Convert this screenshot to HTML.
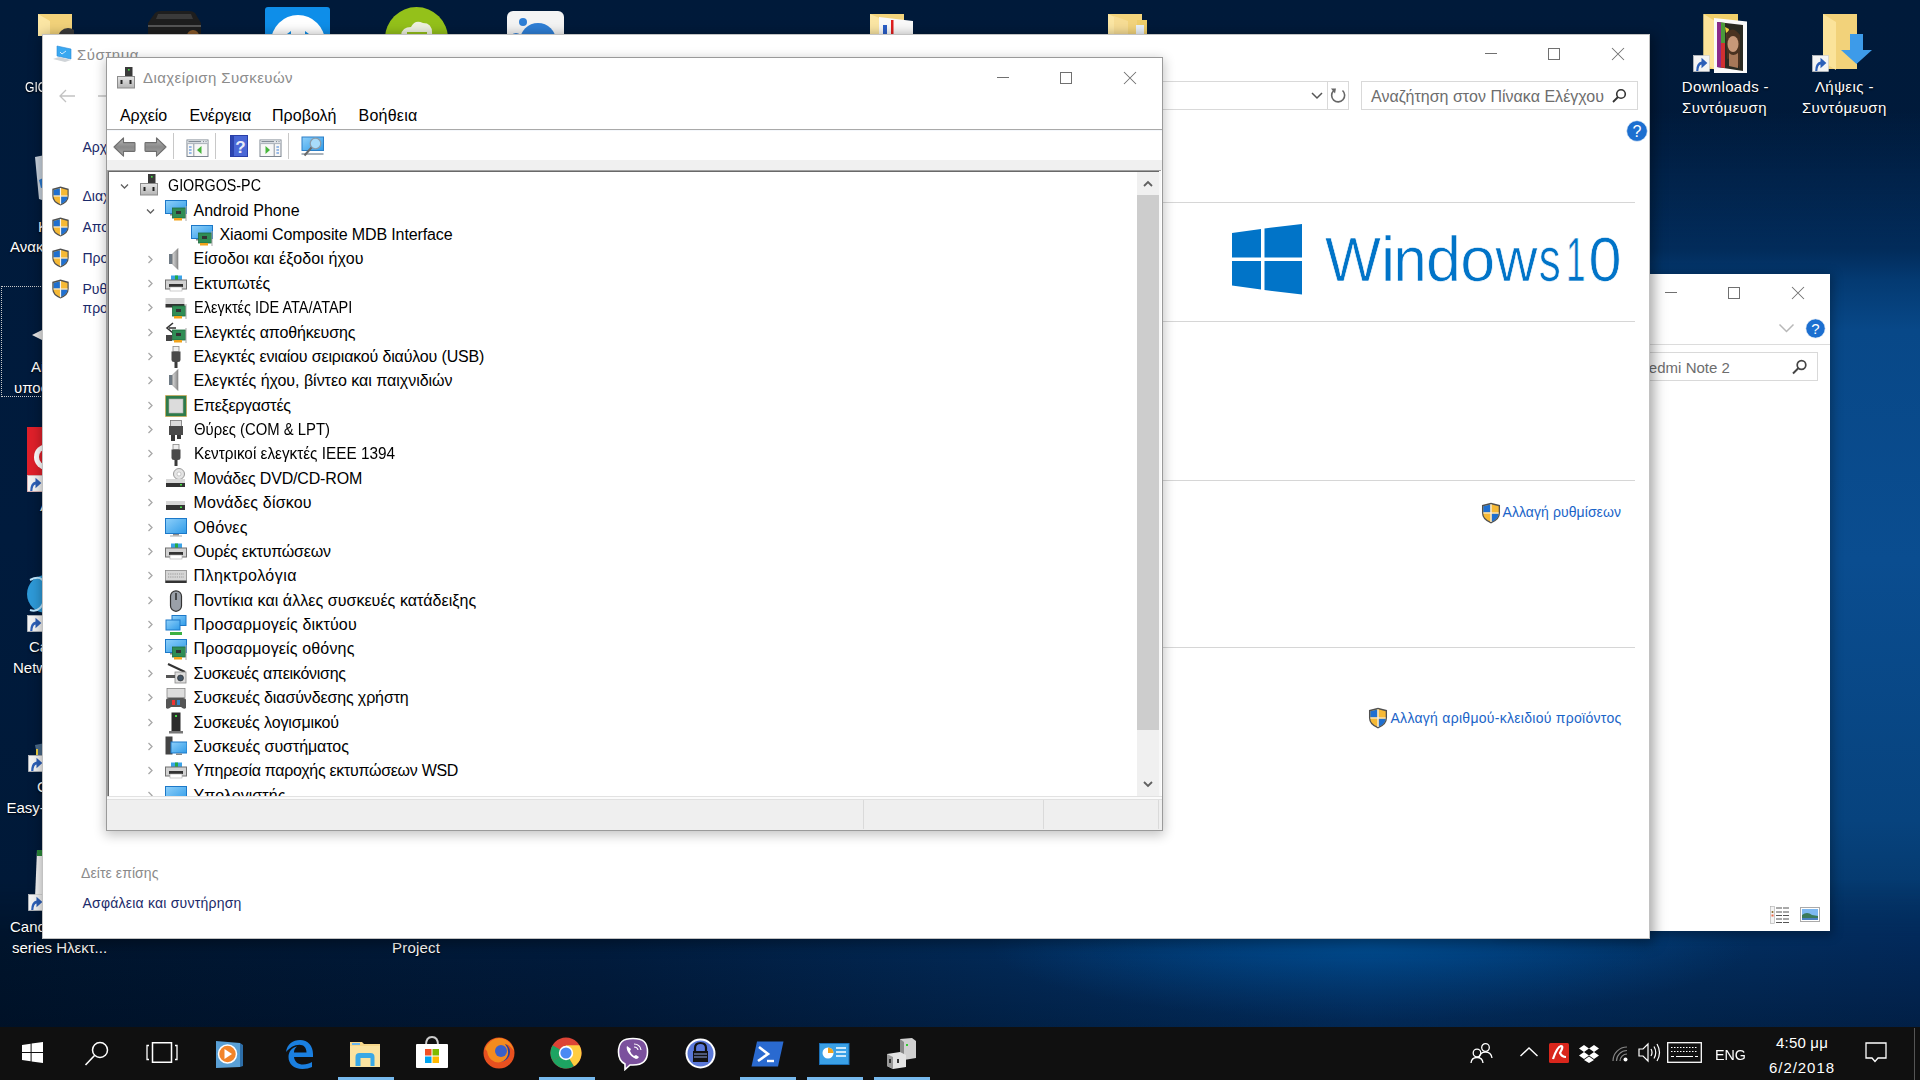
<!DOCTYPE html>
<html><head><meta charset="utf-8">
<style>
*{box-sizing:border-box;margin:0;padding:0}
html,body{width:1920px;height:1080px;overflow:hidden}
body{position:relative;font-family:"Liberation Sans",sans-serif;background:#061a36}
.a{position:absolute}
.t{position:absolute;white-space:nowrap;line-height:1;font-family:"Liberation Sans",sans-serif}
.dl{color:#fff;text-shadow:0 1px 2px #000,0 0 1px #000}
</style></head><body>
<svg width="0" height="0" style="position:absolute">
<defs>
<linearGradient id="gblue" x1="0" y1="0" x2="1" y2="1"><stop offset="0" stop-color="#8fd0fa"/><stop offset="1" stop-color="#2f9be8"/></linearGradient>
<linearGradient id="ggray" x1="0" y1="0" x2="0" y2="1"><stop offset="0" stop-color="#e6e6e6"/><stop offset="1" stop-color="#b4b4b4"/></linearGradient>
<linearGradient id="gspk" x1="0" y1="0" x2="1" y2="0"><stop offset="0" stop-color="#d8d8d8"/><stop offset="1" stop-color="#8a8a8a"/></linearGradient>
<symbol id="card" viewBox="0 0 22 22"><rect x="7.5" y="8" width="13" height="10" fill="#2f8d55" stroke="#1f6b3d" stroke-width=".8"/><rect x="11" y="11" width="5" height="3" fill="#333"/><rect x="9" y="18" width="8" height="2.5" fill="#f2a31b"/><rect x="20.5" y="6" width="1" height="15" fill="#aaa"/></symbol>
<symbol id="i-pc" viewBox="0 0 22 22"><rect x="8" y="0" width="7.5" height="10" fill="#3a3a3a"/><rect x="11" y="2" width="1.6" height="1.6" fill="#44dd44"/><rect x="0.5" y="9.5" width="17" height="11.5" fill="url(#ggray)" stroke="#8c8c8c"/><rect x="3.5" y="13" width="2" height="4" fill="#222"/><rect x="12.5" y="13" width="2" height="4" fill="#222"/></symbol>
<symbol id="i-moncard" viewBox="0 0 22 22"><rect x="0.5" y="0.5" width="21" height="13" fill="url(#gblue)" stroke="#1c78c8"/><rect x="5" y="14" width="6" height="1.5" fill="#888"/><use href="#card"/></symbol>
<symbol id="i-speaker" viewBox="0 0 22 22"><rect x="4" y="6" width="3.5" height="10" fill="#6f7a84"/><path d="M7.5 6 L13 0.5 L13 21.5 L7.5 16 Z" fill="url(#gspk)" stroke="#888" stroke-width=".6"/></symbol>
<symbol id="i-printer" viewBox="0 0 22 22"><rect x="6" y="0.5" width="11" height="5" fill="#3ba3e8"/><rect x="10" y="0.5" width="3" height="5" fill="#22aa44"/><rect x="0.5" y="5" width="21" height="9" fill="#d2d2d2" stroke="#707070"/><rect x="4" y="9" width="14" height="3" fill="#333"/><rect x="5" y="12" width="12" height="4" fill="#fff" stroke="#aaa" stroke-width=".6"/></symbol>
<symbol id="i-ide" viewBox="0 0 22 22"><rect x="0.5" y="0" width="19" height="6" fill="#d4d4d4"/><rect x="0.5" y="6" width="19" height="3.5" fill="#333"/><use href="#card"/></symbol>
<symbol id="i-storage" viewBox="0 0 22 22"><path d="M8 1 L2 6 L8 11 M4 6 L11 6" stroke="#333" stroke-width="1.6" fill="none"/><rect x="1" y="13" width="6" height="6" fill="#444"/><use href="#card"/></symbol>
<symbol id="i-usb" viewBox="0 0 22 22"><rect x="8" y="0.5" width="6" height="5" fill="#eee" stroke="#888" stroke-width=".8"/><path d="M6.5 5.5 H15.5 V14 Q15.5 16 13 16 H9 Q6.5 16 6.5 14 Z" fill="#4a4a4a"/><rect x="9.5" y="16" width="3" height="6" fill="#3a3a3a"/></symbol>
<symbol id="i-chip" viewBox="0 0 22 22"><rect x="0.5" y="0.5" width="21" height="21" fill="#2e7b4a" stroke="#e8a030" stroke-dasharray="1 1"/><rect x="4" y="4" width="14" height="14" fill="#dcdcdc" stroke="#aaa" stroke-width=".6"/></symbol>
<symbol id="i-port" viewBox="0 0 22 22"><rect x="5.5" y="0.5" width="11" height="6" fill="#ddd" stroke="#777" stroke-width=".8"/><rect x="4" y="6" width="14" height="9" fill="#4a4a4a"/><rect x="6" y="15" width="4" height="6" fill="#3a3a3a"/><rect x="12" y="15" width="4" height="4" fill="#3a3a3a"/></symbol>
<symbol id="i-dvd" viewBox="0 0 22 22"><circle cx="14" cy="6" r="5.5" fill="#e4e4e4" stroke="#999"/><circle cx="14" cy="6" r="2" fill="#fff" stroke="#aaa" stroke-width=".6"/><rect x="1" y="11" width="19" height="4" fill="#d8d8d8"/><rect x="1" y="15" width="19" height="4" fill="#333"/><rect x="15" y="16" width="2" height="1.5" fill="#4d4"/></symbol>
<symbol id="i-disk" viewBox="0 0 22 22"><rect x="1" y="8" width="19" height="4" fill="#d8d8d8"/><rect x="1" y="12" width="19" height="5" fill="#333"/><rect x="15" y="13.5" width="2" height="1.5" fill="#4d4"/></symbol>
<symbol id="i-monitor" viewBox="0 0 22 22"><rect x="0.5" y="1.5" width="21" height="15" fill="url(#gblue)" stroke="#1c78c8"/><rect x="8" y="17" width="6" height="1.5" fill="#888"/><rect x="5" y="18.5" width="12" height="1" fill="#aaa"/></symbol>
<symbol id="i-keyboard" viewBox="0 0 22 22"><rect x="0.5" y="4.5" width="21" height="12" fill="#d6d6d6" stroke="#888" stroke-width=".8"/><path d="M3 8h16M3 11h16" stroke="#999" stroke-dasharray="1.2 1"/><rect x="0.5" y="14.5" width="21" height="2.5" fill="#333"/></symbol>
<symbol id="i-mouse" viewBox="0 0 22 22"><rect x="5.5" y="0.8" width="11" height="20.5" rx="5.5" fill="#9aa0a8" stroke="#333" stroke-width="1.2"/><rect x="10.3" y="3" width="1.4" height="7" fill="#222"/></symbol>
<symbol id="i-net" viewBox="0 0 22 22"><rect x="7" y="0.5" width="14" height="10" fill="url(#gblue)" stroke="#1c78c8"/><rect x="1" y="5" width="14" height="10" fill="url(#gblue)" stroke="#1c78c8"/><rect x="5" y="17" width="12" height="3" fill="#3cb043"/></symbol>
<symbol id="i-imaging" viewBox="0 0 22 22"><path d="M3 1 L20 9" stroke="#333" stroke-width="2"/><rect x="10" y="9" width="11" height="11" fill="#ddd" stroke="#888" stroke-width=".8"/><circle cx="15.5" cy="15" r="3" fill="#456" stroke="#222" stroke-width=".6"/><rect x="1" y="12" width="9" height="3" fill="#555"/></symbol>
<symbol id="i-hid" viewBox="0 0 22 22"><rect x="2" y="0.5" width="18" height="9" fill="#ddd" stroke="#888" stroke-width=".8"/><path d="M1 12 Q1 10 4 10 H18 Q21 10 21 12 L21 20 Q19 22 16 19 H6 Q3 22 1 20 Z" fill="#555"/><rect x="7" y="12" width="3" height="5" fill="#e33"/><rect x="12" y="12" width="3" height="5" fill="#38c"/></symbol>
<symbol id="i-software" viewBox="0 0 22 22"><rect x="6.5" y="0.5" width="9" height="19" fill="#2b2b2b"/><rect x="10" y="3" width="2" height="2" fill="#4d4"/><rect x="4" y="19" width="14" height="2.5" fill="#777"/></symbol>
<symbol id="i-system" viewBox="0 0 22 22"><rect x="0.5" y="0.5" width="7" height="18" fill="#444"/><rect x="6" y="6" width="16" height="11" fill="url(#gblue)" stroke="#1c78c8"/><rect x="11" y="17.5" width="6" height="1.5" fill="#888"/></symbol>
<symbol id="shield" viewBox="0 0 18 20"><path d="M9 0.6 L17.2 2.8 V10 Q17.2 16.3 9 19.5 Q0.8 16.3 0.8 10 V2.8 Z" fill="#505050"/><path d="M9 2 L16 3.9 V10 Q16 15.3 9 18.2 Q2 15.3 2 10 V3.9 Z" fill="#f6b935"/><path d="M8.4 2.2 V9.4 H2 V3.9 Z" fill="#1f6fd0"/><path d="M9.6 10.6 H16 Q15.9 15.2 9.6 18 Z" fill="#1f6fd0"/><path d="M9 2 V18.2 M2 10 H16" stroke="#f4f4f4" stroke-width="1.1"/></symbol>
<symbol id="sc" viewBox="0 0 16 16"><rect x="0.5" y="0.5" width="15" height="15" fill="#f4f4f4" stroke="#ccc" stroke-width=".6"/><path d="M3 15 Q3 7 8 6 V2.5 L13.5 7.5 L8 12.5 V9 Q5.5 9.5 5 15 Z" fill="#2c5fb8"/></symbol>
</defs></svg>
<div class="a" style="left:0px;top:0px;width:1920px;height:1080px;background:linear-gradient(180deg,#001a3a 0%,#001b3d 50%,#001835 100%)"></div>
<div class="a" style="left:1560px;top:0px;width:360px;height:1030px;background:linear-gradient(180deg,rgba(3,40,85,0) 110px,#022c5b 250px,#043a72 280px,#084888 330px,#0a4d90 560px,#07437e 820px,#03305f 960px,#022a56 1030px);-webkit-mask-image:linear-gradient(90deg,transparent 0,#000 90px)"></div>
<div class="a" style="left:0px;top:880px;width:1920px;height:150px;background:linear-gradient(90deg,#00142c 0,#011c3e 600px,#022a58 1000px,#033670 1370px,#022d5e 1700px,#02295a 1920px);-webkit-mask-image:linear-gradient(180deg,transparent 0,#000 60px)"></div>
<div class="a" style="left:950px;top:900px;width:900px;height:130px;background:radial-gradient(ellipse 380px 75px at 420px 45px, rgba(0,78,148,.95), rgba(0,78,148,0))"></div>
<div class="a" style="left:0px;top:940px;width:1920px;height:90px;background:linear-gradient(180deg,rgba(0,12,30,0) 0,rgba(0,12,30,.35) 90px)"></div>
<svg class="a" style="left:38px;top:14px;" width="36" height="22" viewBox="0 0 36 22"><rect x="0" y="0" width="34" height="22" fill="#f2d27a"/><path d="M0 0 L12 7 V22 H0 Z" fill="#fbe6a4"/><circle cx="30" cy="24" r="10" fill="#3a3a3a"/></svg>
<svg class="a" style="left:147px;top:11px;" width="55" height="24" viewBox="0 0 55 24"><path d="M8 2 Q10 0 14 0 H42 Q46 0 48 2 L54 12 V24 H1 V12 Z" fill="#1e1e1e"/><path d="M11 3 H44 L46 8 H9 Z" fill="#3a3a3a"/><rect x="1" y="14" width="53" height="2" fill="#555"/><circle cx="46" cy="25" r="6" fill="#8a5a2a"/></svg>
<svg class="a" style="left:265px;top:7px;" width="66" height="28" viewBox="0 0 66 28"><rect x="0" y="0" width="65" height="30" rx="3" fill="#0e8ee9"/><circle cx="33" cy="35" r="27" fill="#fff"/><path d="M18 30 L26 24 V36 Z M48 30 L40 24 V36 Z" fill="#0e8ee9"/></svg>
<svg class="a" style="left:385px;top:7px;" width="63" height="28" viewBox="0 0 63 28"><circle cx="31.5" cy="31.5" r="31.5" fill="#94c11a"/><path d="M16 30 Q16 20 26 20 Q30 12 38 16 Q48 16 47 28 V35 H16 Z" fill="#eef2e0"/><rect x="23" y="26" width="18" height="10" fill="none" stroke="#94c11a" stroke-width="2"/></svg>
<svg class="a" style="left:507px;top:11px;" width="57" height="24" viewBox="0 0 57 24"><rect x="0" y="0" width="57" height="30" rx="6" fill="#f4f4f4"/><circle cx="31" cy="30" r="18" fill="#2f7fd6"/><circle cx="9" cy="28" r="6" fill="#2f7fd6"/><circle cx="16" cy="11" r="4" fill="#2f7fd6"/></svg>
<svg class="a" style="left:870px;top:14px;" width="43" height="21" viewBox="0 0 43 21"><rect x="0" y="0" width="34" height="21" fill="#f3d47c"/><path d="M0 0 L14 6 V21 H0 Z" fill="#fbe6a4"/><path d="M9 3 L43 7 V21 H9 Z" fill="#fafafa"/><rect x="21" y="6" width="2.5" height="15" fill="#e02020"/><rect x="13" y="11" width="4" height="10" fill="#2a5ec8"/></svg>
<svg class="a" style="left:1108px;top:14px;" width="40" height="21" viewBox="0 0 40 21"><rect x="0" y="0" width="34" height="21" fill="#f3d47c"/><path d="M0 0 L14 6 V21 H0 Z" fill="#fbe6a4"/><path d="M6 2 L20 7 V21 H6 Z" fill="#f7dd95"/><rect x="29" y="6" width="10" height="15" fill="#f0cf6a"/><rect x="28" y="11" width="8" height="10" fill="#eaf2fa"/></svg>
<div class="t" style="left:25.00px;top:78.80px;font-size:15px;color:#fff;transform:scaleX(0.8091);transform-origin:0 0;text-shadow:0 1px 2px #000">GIORGOS</div>
<svg class="a" style="left:33px;top:155px;" width="12" height="46" viewBox="0 0 12 46"><path d="M2 2 L12 0 V46 L6 44 Z" fill="#c9d3de"/><path d="M6 25 L12 22 V32 L8 33 Z" fill="#2a7ad0"/></svg>
<div class="t" style="left:38.00px;top:219.30px;font-size:15px;color:#fff;text-shadow:0 1px 2px #000">Κάδος</div>
<div class="t" style="left:10.00px;top:239.00px;font-size:15px;color:#fff;text-shadow:0 1px 2px #000">Ανακύκλωσης</div>
<div class="a" style="left:1px;top:286px;width:44px;height:111px;border:1px dotted #c8c8c8"></div>
<svg class="a" style="left:31px;top:328px;" width="14" height="14" viewBox="0 0 14 14"><path d="M1 7 L13 1 V13 Z" fill="#e4e4e4"/></svg>
<div class="t" style="left:31.00px;top:359.10px;font-size:15px;color:#fff;text-shadow:0 1px 2px #000">Αίτηση</div>
<div class="t" style="left:14.00px;top:380.00px;font-size:15px;color:#fff;text-shadow:0 1px 2px #000">υποστήριξης</div>
<svg class="a" style="left:27px;top:427px;" width="18" height="65" viewBox="0 0 18 65"><rect x="0" y="0" width="18" height="65" fill="#e0202a"/><circle cx="20" cy="30" r="13" fill="#fff"/><circle cx="20" cy="30" r="8" fill="#e0202a"/><use href="#sc" x="0" y="48" width="17" height="17"/></svg>
<div class="t" style="left:40.00px;top:498.30px;font-size:15px;color:#fff;text-shadow:0 1px 2px #000">A</div>
<svg class="a" style="left:26px;top:574px;" width="20" height="58" viewBox="0 0 20 58"><circle cx="20" cy="20" r="19" fill="#2e9ad8"/><path d="M4 6 Q20 -2 20 20 Q16 40 4 36" stroke="#bfe8ff" stroke-width="2" fill="none"/><use href="#sc" x="1" y="41" width="17" height="17"/></svg>
<div class="t" style="left:29.00px;top:638.80px;font-size:15px;color:#fff;text-shadow:0 1px 2px #000">Canon</div>
<div class="t" style="left:13.00px;top:660.30px;font-size:15px;color:#fff;text-shadow:0 1px 2px #000">Network</div>
<svg class="a" style="left:27px;top:743px;" width="18" height="30" viewBox="0 0 18 30"><path d="M8 2 L18 0 V12 L10 12 Z" fill="#4a6a8a"/><rect x="9" y="6" width="2" height="6" fill="#f0d040"/><use href="#sc" x="1" y="12" width="17" height="17"/></svg>
<div class="t" style="left:37.00px;top:778.90px;font-size:15px;color:#fff;text-shadow:0 1px 2px #000">Canon</div>
<div class="t" style="left:6.50px;top:800.10px;font-size:15px;color:#fff;text-shadow:0 1px 2px #000">Easy-PhotoPrint</div>
<svg class="a" style="left:27px;top:850px;" width="18" height="62" viewBox="0 0 18 62"><path d="M10 0 H18 V48 H8 Z" fill="#f4f4f4"/><path d="M10 0 H18 V6 H10 Z" fill="#2a8a3a"/><use href="#sc" x="1" y="44" width="17" height="17"/></svg>
<div class="t" style="left:10.00px;top:919.30px;font-size:15px;color:#fff;text-shadow:0 1px 2px #000">Canon MX490</div>
<div class="t" style="left:12.00px;top:940.30px;font-size:15px;color:#fff;text-shadow:0 1px 2px #000">series Ηλεκτ...</div>
<div class="t" style="left:392.00px;top:940.30px;font-size:15px;color:#fff;letter-spacing:0.188px;text-shadow:0 1px 2px #000">Project</div>
<svg class="a" style="left:1693px;top:13px;" width="54" height="60" viewBox="0 0 54 60"><path d="M10.5 1 H45 V56 H10.5 Z" fill="#f0cf6a"/><path d="M10.5 1 L22 8 V57 L10.5 50 Z" fill="#fbe39a"/><path d="M21 5 L54 8.5 V66 L21 60 Z" fill="#fafafa"/><path d="M24 9 L50 12 V58 L24 54 Z" fill="#2a2a22"/><path d="M24 9 L28 9.5 V54.5 L24 54 Z" fill="#8a2a8a"/><path d="M28 9.5 L32 10 V30 L28 30 Z" fill="#4a9a3a"/><path d="M28 30 L32 30 V55 L28 54.5 Z" fill="#d03030"/><path d="M32 14 L36 16 L34 26 Z" fill="#f0d040"/><path d="M33 20 Q40 12 47 22 V56 L44 50 Q40 44 34 46 Z" fill="#4a3220"/><ellipse cx="40" cy="31" rx="5.5" ry="8" fill="#c89878"/><path d="M36 40 Q40 44 45 40 V55 L36 53 Z" fill="#a87858"/><use href="#sc" x="0" y="42" width="17" height="17"/></svg>
<div class="t" style="left:1681.80px;top:79.20px;font-size:15px;color:#fff;letter-spacing:0.330px;text-shadow:0 1px 2px #000">Downloads -</div>
<div class="t" style="left:1682.00px;top:99.80px;font-size:15px;color:#fff;letter-spacing:0.461px;text-shadow:0 1px 2px #000">Συντόμευση</div>
<svg class="a" style="left:1812px;top:13px;" width="60" height="60" viewBox="0 0 60 60"><path d="M11 1 H45 V56 H11 Z" fill="#f2d27a"/><path d="M11 1 L24 9 V57 L11 49 Z" fill="#fbe39a"/><path d="M38 21 H51 V37 H60 L44.5 51 L29 37 H38 Z" fill="#3d9be9"/><use href="#sc" x="0" y="42" width="17" height="17"/></svg>
<div class="t" style="left:1814.90px;top:79.30px;font-size:15px;color:#fff;letter-spacing:0.441px;text-shadow:0 1px 2px #000">Λήψεις -</div>
<div class="t" style="left:1801.90px;top:99.80px;font-size:15px;color:#fff;letter-spacing:0.461px;text-shadow:0 1px 2px #000">Συντόμευση</div>
<div class="a" style="left:1500px;top:274px;width:330px;height:657px;background:#fff;box-shadow:1px 2px 10px 2px rgba(0,0,0,.3)"></div>
<div class="a" style="left:1665px;top:292px;width:12px;height:1px;background:#707070"></div>
<div class="a" style="left:1728px;top:287px;width:12px;height:12px;border:1px solid #707070"></div>
<svg class="a" style="left:1791px;top:286px;" width="14" height="14" viewBox="0 0 14 14"><path d="M1 1 L13 13 M13 1 L1 13" stroke="#707070" stroke-width="1.05"/></svg>
<svg class="a" style="left:1778px;top:323px;" width="17" height="11" viewBox="0 0 17 11"><path d="M1.5 1.5 L8.5 8.5 L15.5 1.5" stroke="#b8b8b8" stroke-width="1.5" fill="none"/></svg>
<svg class="a" style="left:1805px;top:318px;" width="21" height="21" viewBox="0 0 21 21"><circle cx="10.5" cy="10.5" r="9.6" fill="#1c6fd0" stroke="#dfe9f5" stroke-width=".6"/><text x="10.5" y="16" font-family="Liberation Sans" font-size="15" fill="#fff" text-anchor="middle">?</text></svg>
<div class="a" style="left:1500px;top:344px;width:330px;height:1px;background:#dcdcdc"></div>
<div class="a" style="left:1500px;top:352px;width:318px;height:29px;border:1px solid #d9d9d9;background:#fff"></div>
<div class="t" style="left:1638.00px;top:360.10px;font-size:15px;color:#6d6d6d;letter-spacing:0.023px;">Redmi Note 2</div>
<svg class="a" style="left:1790px;top:359px;" width="18" height="16" viewBox="0 0 18 16"><circle cx="11.5" cy="6" r="4.3" stroke="#444" stroke-width="1.7" fill="none"/><path d="M8.5 9 L3 14.5" stroke="#444" stroke-width="2"/></svg>
<svg class="a" style="left:1770px;top:906px;" width="20" height="18" viewBox="0 0 20 18"><rect x="0.5" y="0.5" width="4" height="17" fill="#f4f4f4" stroke="#aaa" stroke-width=".6"/><path d="M6 2h6M13 2h6M6 6h6M13 6h6M6 9.5h6M13 9.5h6M6 13h6M13 13h6M6 16.5h6M13 16.5h6" stroke="#555" stroke-width="1"/><circle cx="2.5" cy="6" r="1" fill="#862"/><rect x="1.5" y="8.5" width="2" height="2" fill="#e64"/></svg>
<svg class="a" style="left:1800px;top:907px;" width="20" height="15" viewBox="0 0 20 15"><rect x="0.5" y="0.5" width="19" height="14" fill="#fff" stroke="#aaa"/><rect x="2" y="2" width="16" height="11" fill="#7db8f0"/><path d="M2 8 Q7 4 12 8 L18 9 V13 H2 Z" fill="#3a7a5a"/><rect x="2" y="11" width="16" height="2" fill="#4a80c0"/></svg>
<div class="a" style="left:42px;top:34px;width:1608px;height:905px;background:#fff;border:1px solid rgba(120,120,120,.45);box-shadow:2px 3px 12px 2px rgba(0,0,0,.35)"></div>
<svg class="a" style="left:52px;top:45px;" width="20" height="19" viewBox="0 0 20 19"><path d="M5 1 L19 4 V14 L5 11 Z" fill="#3aa8f0" stroke="#2a8ad8" stroke-width=".6"/><path d="M8 7 L10 9 L14 6" stroke="#cfeaff" stroke-width="1" fill="none"/><path d="M1 14 L13 17 L19 15 L7 12 Z" fill="#d0d4d8"/></svg>
<div class="t" style="left:77.00px;top:46.70px;font-size:15px;color:#8c8c8c;letter-spacing:0.525px;">Σύστημα</div>
<div class="a" style="left:1485px;top:53px;width:12px;height:1px;background:#707070"></div>
<div class="a" style="left:1548px;top:48px;width:12px;height:12px;border:1px solid #707070"></div>
<svg class="a" style="left:1611px;top:47px;" width="14" height="14" viewBox="0 0 14 14"><path d="M1 1 L13 13 M13 1 L1 13" stroke="#707070" stroke-width="1.05"/></svg>
<svg class="a" style="left:58px;top:89px;" width="18" height="14" viewBox="0 0 18 14"><path d="M8 1 L2 7 L8 13 M2 7 H17" stroke="#c2c2c2" stroke-width="1.3" fill="none"/></svg>
<svg class="a" style="left:97px;top:89px;" width="18" height="14" viewBox="0 0 18 14"><path d="M10 1 L16 7 L10 13 M1 7 H16" stroke="#c2c2c2" stroke-width="1.3" fill="none"/></svg>
<div class="a" style="left:1100px;top:81px;width:249px;height:29px;border:1px solid #d9d9d9;background:#fff"></div>
<div class="a" style="left:1327px;top:82px;width:1px;height:27px;background:#d9d9d9"></div>
<svg class="a" style="left:1310px;top:91px;" width="14" height="10" viewBox="0 0 14 10"><path d="M2 2 L7 7 L12 2" stroke="#555" stroke-width="1.5" fill="none"/></svg>
<svg class="a" style="left:1329px;top:86px;" width="18" height="19" viewBox="0 0 18 19"><path d="M13.5 4.5 A6.5 6.5 0 1 1 4.5 4.8" stroke="#666" stroke-width="1.6" fill="none"/><path d="M2 2.5 L7 2.5 L6 7.5 Z" fill="#666"/></svg>
<div class="a" style="left:1361px;top:81px;width:277px;height:29px;border:1px solid #d9d9d9;background:#fff"></div>
<div class="t" style="left:1371.00px;top:88.56px;font-size:16px;color:#6d6d6d;letter-spacing:0.023px;">Αναζήτηση στον Πίνακα Ελέγχου</div>
<svg class="a" style="left:1611px;top:88px;" width="16" height="16" viewBox="0 0 16 16"><circle cx="10" cy="6" r="4.3" stroke="#333" stroke-width="1.6" fill="none"/><path d="M7 9 L2 14" stroke="#333" stroke-width="1.8"/></svg>
<svg class="a" style="left:1626px;top:120px;" width="22" height="22" viewBox="0 0 22 22"><circle cx="11" cy="11" r="10.3" fill="#1c6fd0" stroke="#dfe9f5" stroke-width=".6"/><text x="11" y="17" font-family="Liberation Sans" font-size="16" fill="#fff" text-anchor="middle">?</text></svg>
<div class="a" style="left:1100px;top:202px;width:535px;height:1px;background:#d6d6d6"></div>
<div class="a" style="left:1100px;top:321px;width:535px;height:1px;background:#d6d6d6"></div>
<div class="a" style="left:1100px;top:480px;width:535px;height:1px;background:#d6d6d6"></div>
<div class="a" style="left:1100px;top:647px;width:535px;height:1px;background:#d6d6d6"></div>
<svg class="a" style="left:1232px;top:224px;" width="71" height="71" viewBox="0 0 71 71"><path d="M0 9 L29 5 V33.5 H0 Z M32.5 4.4 L70 0 V33.5 H32.5 Z M0 37 H29 V65.5 L0 61.5 Z M32.5 37 H70 V70.5 L32.5 66 Z" fill="#0174c8"/></svg>
<svg class="a" style="left:1300px;top:225px;" width="340" height="70" viewBox="0 0 340 70"><g font-family="Liberation Sans" font-size="62.3" fill="#0174c8" stroke="#fff" stroke-width="0.7"><text transform="translate(25.40,55.8) scale(0.9505,1)" x="-0.32" y="0">W</text><text transform="translate(85.00,55.8) scale(1.0563,1)" x="-4.12" y="0">i</text><text transform="translate(97.50,55.8) scale(0.9583,1)" x="-4.12" y="0">n</text><text transform="translate(128.75,55.8) scale(1.0096,1)" x="-2.64" y="0">d</text><text transform="translate(162.90,55.8) scale(1.0083,1)" x="-2.64" y="0">o</text><text transform="translate(195.40,55.8) scale(0.9315,1)" x="0.11" y="0">w</text><text transform="translate(240.00,55.8) scale(0.7075,1)" x="-1.80" y="0">s</text><text transform="translate(268.75,55.8) scale(0.5593,1)" x="-4.75" y="0">1</text><text transform="translate(290.80,55.8) scale(0.9537,1)" x="-2.43" y="0">0</text></g></svg>
<svg class="a" style="left:1481px;top:502px;" width="20" height="22" viewBox="0 0 20 22"><use href="#shield" width="20" height="22"/></svg>
<div class="t" style="left:1502.50px;top:504.95px;font-size:14px;color:#1a64c8;letter-spacing:0.075px;">Αλλαγή ρυθμίσεων</div>
<svg class="a" style="left:1368px;top:707px;" width="20" height="22" viewBox="0 0 20 22"><use href="#shield" width="20" height="22"/></svg>
<div class="t" style="left:1390.50px;top:710.65px;font-size:14px;color:#1a64c8;letter-spacing:0.279px;">Αλλαγή αριθμού-κλειδιού προϊόντος</div>
<div class="t" style="left:82.50px;top:140.15px;font-size:14px;color:#1b2a6a;">Αρχική σελίδα Πίνακα Ελέγχου</div>
<svg class="a" style="left:51px;top:186px;" width="19" height="20" viewBox="0 0 19 20"><use href="#shield" width="19" height="20"/></svg>
<div class="t" style="left:82.50px;top:188.95px;font-size:14px;color:#1b2a6a;">Διαχείριση Συσκευών</div>
<svg class="a" style="left:51px;top:217px;" width="19" height="20" viewBox="0 0 19 20"><use href="#shield" width="19" height="20"/></svg>
<div class="t" style="left:82.50px;top:219.95px;font-size:14px;color:#1b2a6a;">Απομακρυσμένες ρυθμίσεις</div>
<svg class="a" style="left:51px;top:248px;" width="19" height="20" viewBox="0 0 19 20"><use href="#shield" width="19" height="20"/></svg>
<div class="t" style="left:82.50px;top:250.95px;font-size:14px;color:#1b2a6a;">Προστασία συστήματος</div>
<svg class="a" style="left:51px;top:279px;" width="19" height="20" viewBox="0 0 19 20"><use href="#shield" width="19" height="20"/></svg>
<div class="t" style="left:82.50px;top:281.65px;font-size:14px;color:#1b2a6a;">Ρυθμίσεις συστήματος για</div>
<div class="t" style="left:82.50px;top:301.15px;font-size:14px;color:#1b2a6a;">προχωρημένους</div>
<div class="t" style="left:81.00px;top:865.95px;font-size:14px;color:#8a8a8a;letter-spacing:0.078px;">Δείτε επίσης</div>
<div class="t" style="left:82.50px;top:895.95px;font-size:14px;color:#1b2a6a;letter-spacing:0.218px;">Ασφάλεια και συντήρηση</div>
<div class="a" style="left:106px;top:57px;width:1057px;height:774px;background:#fff;border:1px solid #9a9a9a;box-shadow:0 3px 11px 1px rgba(0,0,0,.24)"></div>
<svg class="a" style="left:117px;top:67px;" width="22" height="22" viewBox="0 0 22 22"><use href="#i-pc"/></svg>
<div class="t" style="left:143.00px;top:70.10px;font-size:15px;color:#8c8c8c;letter-spacing:0.427px;">Διαχείριση Συσκευών</div>
<div class="a" style="left:997px;top:77px;width:12px;height:1px;background:#707070"></div>
<div class="a" style="left:1060px;top:72px;width:12px;height:12px;border:1px solid #707070"></div>
<svg class="a" style="left:1123px;top:71px;" width="14" height="14" viewBox="0 0 14 14"><path d="M1 1 L13 13 M13 1 L1 13" stroke="#707070" stroke-width="1.05"/></svg>
<div class="t" style="left:120.00px;top:107.76px;font-size:16px;color:#000;letter-spacing:-0.128px;">Αρχείο</div>
<div class="t" style="left:189.50px;top:107.76px;font-size:16px;color:#000;letter-spacing:-0.168px;">Ενέργεια</div>
<div class="t" style="left:272.00px;top:107.76px;font-size:16px;color:#000;letter-spacing:0.036px;">Προβολή</div>
<div class="t" style="left:358.50px;top:107.76px;font-size:16px;color:#000;letter-spacing:0.241px;">Βοήθεια</div>
<div class="a" style="left:107px;top:129px;width:1055px;height:1px;background:#a9a9a9"></div>
<div class="a" style="left:107px;top:130px;width:1055px;height:1px;background:#f4f7fb"></div>
<svg class="a" style="left:112px;top:137px;" width="24" height="20" viewBox="0 0 24 20"><defs><linearGradient id="garr" x1="0" y1="0" x2="0" y2="1"><stop offset="0" stop-color="#b8b8b8"/><stop offset=".5" stop-color="#8a8a8a"/><stop offset="1" stop-color="#a8a8a8"/></linearGradient></defs><path d="M2 10 L11.5 0.8 V5.6 H22.3 Q23 5.6 23 6.4 V13.6 Q23 14.4 22.3 14.4 H11.5 V19.2 Z" fill="url(#garr)" stroke="#6e6e6e" stroke-width="1.1" stroke-linejoin="round"/></svg>
<svg class="a" style="left:144px;top:137px;" width="24" height="20" viewBox="0 0 24 20"><path d="M22 10 L12.5 0.8 V5.6 H1.7 Q1 5.6 1 6.4 V13.6 Q1 14.4 1.7 14.4 H12.5 V19.2 Z" fill="url(#garr)" stroke="#6e6e6e" stroke-width="1.1" stroke-linejoin="round"/></svg>
<div class="a" style="left:173px;top:133px;width:1px;height:26px;background:#c8c8c8"></div>
<div class="a" style="left:215px;top:133px;width:1px;height:26px;background:#c8c8c8"></div>
<div class="a" style="left:288px;top:133px;width:1px;height:26px;background:#c8c8c8"></div>
<svg class="a" style="left:186px;top:139px;" width="23" height="19" viewBox="0 0 23 19"><rect x="1" y="1" width="21" height="16.5" fill="#f7f7f7" stroke="#7c8590"/><rect x="1.5" y="1.5" width="20" height="2.6" fill="#dfe3e8"/><path d="M2.5 2.6 H15" stroke="#7a838e" stroke-width="1"/><path d="M17 2.6h1M19.5 2.6h1" stroke="#7a838e"/><path d="M1.5 4.6 H21.5" stroke="#a9b1ba"/><rect x="7.3" y="5" width="1" height="12" fill="#8d96a0"/><path d="M3 8h2.6M3 11h2.6M3 14h2.6" stroke="#3a7ed8" stroke-width="1.2"/><path d="M15.5 7 L11 11 L15.5 15 Z" fill="#46b53a"/></svg>
<svg class="a" style="left:230px;top:135px;" width="18" height="22" viewBox="0 0 18 22"><rect x="0" y="0" width="18" height="22" fill="#4a68d6"/><rect x="0" y="0" width="4" height="22" fill="#2c45b0"/><rect x="0.5" y="0.5" width="17" height="21" fill="none" stroke="#2a3fa8" stroke-width="1"/><text x="10.5" y="17.5" font-family="Liberation Sans" font-weight="700" font-size="17" fill="#e8ecf8" text-anchor="middle">?</text></svg>
<svg class="a" style="left:259px;top:139px;" width="23" height="19" viewBox="0 0 23 19"><rect x="1" y="1" width="21" height="16.5" fill="#f7f7f7" stroke="#7c8590"/><rect x="1.5" y="1.5" width="20" height="2.6" fill="#dfe3e8"/><path d="M2.5 2.6 H15" stroke="#7a838e" stroke-width="1"/><path d="M17 2.6h1M19.5 2.6h1" stroke="#7a838e"/><path d="M1.5 4.6 H21.5" stroke="#a9b1ba"/><rect x="14.7" y="5" width="1" height="12" fill="#8d96a0"/><path d="M17.4 8h2.6M17.4 11h2.6M17.4 14h2.6" stroke="#3a7ed8" stroke-width="1.2"/><path d="M6.5 7 L11 11 L6.5 15 Z" fill="#46b53a"/></svg>
<svg class="a" style="left:301px;top:136px;" width="24" height="22" viewBox="0 0 24 22"><rect x="1" y="1" width="21.5" height="13.5" fill="url(#gblue)" stroke="#2a7fc8"/><rect x="0.5" y="17" width="22" height="2" fill="#a8b2bc"/><circle cx="14.5" cy="7.5" r="5.3" fill="#a8dcfa" stroke="#8c9caa" stroke-width="1.3"/><path d="M10.5 11.5 L3.5 19.5" stroke="#6a6a6a" stroke-width="2"/></svg>
<div class="a" style="left:107px;top:160px;width:1055px;height:10px;background:#f0f0f0"></div>
<div class="a" style="left:107px;top:170px;width:1054px;height:1px;background:#a0a0a0"></div>
<div class="a" style="left:107px;top:171px;width:1054px;height:1px;background:#696969"></div>
<div class="a" style="left:107px;top:170px;width:1px;height:627px;background:#a0a0a0"></div>
<div class="a" style="left:108px;top:171px;width:1px;height:626px;background:#696969"></div>
<div class="a" style="left:1159px;top:171px;width:2px;height:626px;background:#f8f8f8"></div>
<div class="a" style="left:1137px;top:172px;width:22px;height:624px;background:#f0f0f0"></div>
<div class="a" style="left:1137px;top:195px;width:22px;height:535px;background:#cdcdcd"></div>
<svg class="a" style="left:1142px;top:179px;" width="12" height="10" viewBox="0 0 12 10"><path d="M2 7 L6 3 L10 7" stroke="#606060" stroke-width="1.8" fill="none"/></svg>
<svg class="a" style="left:1142px;top:779px;" width="12" height="10" viewBox="0 0 12 10"><path d="M2 3 L6 7 L10 3" stroke="#606060" stroke-width="1.8" fill="none"/></svg>
<div class="a" style="left:109px;top:172px;width:1028px;height:624px;overflow:hidden">
<svg class="a" style="left:31px;top:1.9000000000000057px;" width="22" height="22" viewBox="0 0 22 22"><use href="#i-pc"/></svg>
<svg class="a" style="left:11px;top:11.400000000000006px;" width="9" height="7" viewBox="0 0 9 7"><path d="M1 1.5 L4.5 5 L8 1.5" stroke="#5f5f5f" stroke-width="1.3" fill="none"/></svg>
<div class="t" style="left:58.50px;top:6.36px;font-size:16px;color:#000;transform:scaleX(0.8941);transform-origin:0 0;">GIORGOS-PC</div>
<svg class="a" style="left:56px;top:28.27000000000001px;" width="22" height="22" viewBox="0 0 22 22"><use href="#i-moncard"/></svg>
<svg class="a" style="left:37px;top:35.77000000000001px;" width="9" height="7" viewBox="0 0 9 7"><path d="M1 1.5 L4.5 5 L8 1.5" stroke="#5f5f5f" stroke-width="1.3" fill="none"/></svg>
<div class="t" style="left:84.50px;top:30.73px;font-size:16px;color:#000;letter-spacing:0.019px;">Android Phone</div>
<svg class="a" style="left:82px;top:52.640000000000015px;" width="22" height="22" viewBox="0 0 22 22"><use href="#i-moncard"/></svg>
<div class="t" style="left:110.50px;top:55.10px;font-size:16px;color:#000;letter-spacing:-0.118px;">Xiaomi Composite MDB Interface</div>
<svg class="a" style="left:56px;top:75.50999999999999px;" width="22" height="22" viewBox="0 0 22 22"><use href="#i-speaker"/></svg>
<svg class="a" style="left:37.5px;top:82.50999999999999px;" width="7" height="9" viewBox="0 0 7 9"><path d="M1.5 1 L5 4.5 L1.5 8" stroke="#a8a8a8" stroke-width="1.3" fill="none"/></svg>
<div class="t" style="left:84.50px;top:79.47px;font-size:16px;color:#000;letter-spacing:0.137px;">Είσοδοι και έξοδοι ήχου</div>
<svg class="a" style="left:56px;top:102.88px;" width="22" height="22" viewBox="0 0 22 22"><use href="#i-printer"/></svg>
<svg class="a" style="left:37.5px;top:106.88px;" width="7" height="9" viewBox="0 0 7 9"><path d="M1.5 1 L5 4.5 L1.5 8" stroke="#a8a8a8" stroke-width="1.3" fill="none"/></svg>
<div class="t" style="left:84.50px;top:103.84px;font-size:16px;color:#000;letter-spacing:-0.165px;">Εκτυπωτές</div>
<svg class="a" style="left:56px;top:125.75px;" width="22" height="22" viewBox="0 0 22 22"><use href="#i-ide"/></svg>
<svg class="a" style="left:37.5px;top:131.25px;" width="7" height="9" viewBox="0 0 7 9"><path d="M1.5 1 L5 4.5 L1.5 8" stroke="#a8a8a8" stroke-width="1.3" fill="none"/></svg>
<div class="t" style="left:84.50px;top:128.21px;font-size:16px;color:#000;transform:scaleX(0.9061);transform-origin:0 0;">Ελεγκτές IDE ATA/ATAPI</div>
<svg class="a" style="left:56px;top:150.12px;" width="22" height="22" viewBox="0 0 22 22"><use href="#i-storage"/></svg>
<svg class="a" style="left:37.5px;top:155.62px;" width="7" height="9" viewBox="0 0 7 9"><path d="M1.5 1 L5 4.5 L1.5 8" stroke="#a8a8a8" stroke-width="1.3" fill="none"/></svg>
<div class="t" style="left:84.50px;top:152.58px;font-size:16px;color:#000;letter-spacing:-0.137px;">Ελεγκτές αποθήκευσης</div>
<svg class="a" style="left:56px;top:174.49px;" width="22" height="22" viewBox="0 0 22 22"><use href="#i-usb"/></svg>
<svg class="a" style="left:37.5px;top:179.99px;" width="7" height="9" viewBox="0 0 7 9"><path d="M1.5 1 L5 4.5 L1.5 8" stroke="#a8a8a8" stroke-width="1.3" fill="none"/></svg>
<div class="t" style="left:84.50px;top:176.95px;font-size:16px;color:#000;letter-spacing:-0.163px;">Ελεγκτές ενιαίου σειριακού διαύλου (USB)</div>
<svg class="a" style="left:56px;top:197.36px;" width="22" height="22" viewBox="0 0 22 22"><use href="#i-speaker"/></svg>
<svg class="a" style="left:37.5px;top:204.36px;" width="7" height="9" viewBox="0 0 7 9"><path d="M1.5 1 L5 4.5 L1.5 8" stroke="#a8a8a8" stroke-width="1.3" fill="none"/></svg>
<div class="t" style="left:84.50px;top:201.32px;font-size:16px;color:#000;letter-spacing:-0.026px;">Ελεγκτές ήχου, βίντεο και παιχνιδιών</div>
<svg class="a" style="left:56px;top:223.23000000000002px;" width="22" height="22" viewBox="0 0 22 22"><use href="#i-chip"/></svg>
<svg class="a" style="left:37.5px;top:228.73000000000002px;" width="7" height="9" viewBox="0 0 7 9"><path d="M1.5 1 L5 4.5 L1.5 8" stroke="#a8a8a8" stroke-width="1.3" fill="none"/></svg>
<div class="t" style="left:84.50px;top:225.69px;font-size:16px;color:#000;letter-spacing:-0.278px;">Επεξεργαστές</div>
<svg class="a" style="left:56px;top:247.60000000000002px;" width="22" height="22" viewBox="0 0 22 22"><use href="#i-port"/></svg>
<svg class="a" style="left:37.5px;top:253.10000000000002px;" width="7" height="9" viewBox="0 0 7 9"><path d="M1.5 1 L5 4.5 L1.5 8" stroke="#a8a8a8" stroke-width="1.3" fill="none"/></svg>
<div class="t" style="left:84.50px;top:250.06px;font-size:16px;color:#000;transform:scaleX(0.9284);transform-origin:0 0;">Θύρες (COM &amp; LPT)</div>
<svg class="a" style="left:56px;top:271.97px;" width="22" height="22" viewBox="0 0 22 22"><use href="#i-usb"/></svg>
<svg class="a" style="left:37.5px;top:277.47px;" width="7" height="9" viewBox="0 0 7 9"><path d="M1.5 1 L5 4.5 L1.5 8" stroke="#a8a8a8" stroke-width="1.3" fill="none"/></svg>
<div class="t" style="left:84.50px;top:274.43px;font-size:16px;color:#000;transform:scaleX(0.9578);transform-origin:0 0;">Κεντρικοί ελεγκτές IEEE 1394</div>
<svg class="a" style="left:56px;top:296.34000000000003px;" width="22" height="22" viewBox="0 0 22 22"><use href="#i-dvd"/></svg>
<svg class="a" style="left:37.5px;top:301.84000000000003px;" width="7" height="9" viewBox="0 0 7 9"><path d="M1.5 1 L5 4.5 L1.5 8" stroke="#a8a8a8" stroke-width="1.3" fill="none"/></svg>
<div class="t" style="left:84.50px;top:298.80px;font-size:16px;color:#000;letter-spacing:-0.171px;">Μονάδες DVD/CD-ROM</div>
<svg class="a" style="left:56px;top:320.71000000000004px;" width="22" height="22" viewBox="0 0 22 22"><use href="#i-disk"/></svg>
<svg class="a" style="left:37.5px;top:326.21000000000004px;" width="7" height="9" viewBox="0 0 7 9"><path d="M1.5 1 L5 4.5 L1.5 8" stroke="#a8a8a8" stroke-width="1.3" fill="none"/></svg>
<div class="t" style="left:84.50px;top:323.17px;font-size:16px;color:#000;letter-spacing:0.202px;">Μονάδες δίσκου</div>
<svg class="a" style="left:56px;top:345.08000000000004px;" width="22" height="22" viewBox="0 0 22 22"><use href="#i-monitor"/></svg>
<svg class="a" style="left:37.5px;top:350.58000000000004px;" width="7" height="9" viewBox="0 0 7 9"><path d="M1.5 1 L5 4.5 L1.5 8" stroke="#a8a8a8" stroke-width="1.3" fill="none"/></svg>
<div class="t" style="left:84.50px;top:347.54px;font-size:16px;color:#000;letter-spacing:0.151px;">Οθόνες</div>
<svg class="a" style="left:56px;top:370.95000000000005px;" width="22" height="22" viewBox="0 0 22 22"><use href="#i-printer"/></svg>
<svg class="a" style="left:37.5px;top:374.95000000000005px;" width="7" height="9" viewBox="0 0 7 9"><path d="M1.5 1 L5 4.5 L1.5 8" stroke="#a8a8a8" stroke-width="1.3" fill="none"/></svg>
<div class="t" style="left:84.50px;top:371.91px;font-size:16px;color:#000;letter-spacing:-0.212px;">Ουρές εκτυπώσεων</div>
<svg class="a" style="left:56px;top:393.82000000000005px;" width="22" height="22" viewBox="0 0 22 22"><use href="#i-keyboard"/></svg>
<svg class="a" style="left:37.5px;top:399.32000000000005px;" width="7" height="9" viewBox="0 0 7 9"><path d="M1.5 1 L5 4.5 L1.5 8" stroke="#a8a8a8" stroke-width="1.3" fill="none"/></svg>
<div class="t" style="left:84.50px;top:396.28px;font-size:16px;color:#000;letter-spacing:0.455px;">Πληκτρολόγια</div>
<svg class="a" style="left:56px;top:418.19000000000005px;" width="22" height="22" viewBox="0 0 22 22"><use href="#i-mouse"/></svg>
<svg class="a" style="left:37.5px;top:423.69000000000005px;" width="7" height="9" viewBox="0 0 7 9"><path d="M1.5 1 L5 4.5 L1.5 8" stroke="#a8a8a8" stroke-width="1.3" fill="none"/></svg>
<div class="t" style="left:84.50px;top:420.65px;font-size:16px;color:#000;letter-spacing:0.055px;">Ποντίκια και άλλες συσκευές κατάδειξης</div>
<svg class="a" style="left:56px;top:442.56000000000006px;" width="22" height="22" viewBox="0 0 22 22"><use href="#i-net"/></svg>
<svg class="a" style="left:37.5px;top:448.06000000000006px;" width="7" height="9" viewBox="0 0 7 9"><path d="M1.5 1 L5 4.5 L1.5 8" stroke="#a8a8a8" stroke-width="1.3" fill="none"/></svg>
<div class="t" style="left:84.50px;top:445.02px;font-size:16px;color:#000;letter-spacing:0.169px;">Προσαρμογείς δικτύου</div>
<svg class="a" style="left:56px;top:466.93000000000006px;" width="22" height="22" viewBox="0 0 22 22"><use href="#i-moncard"/></svg>
<svg class="a" style="left:37.5px;top:472.43000000000006px;" width="7" height="9" viewBox="0 0 7 9"><path d="M1.5 1 L5 4.5 L1.5 8" stroke="#a8a8a8" stroke-width="1.3" fill="none"/></svg>
<div class="t" style="left:84.50px;top:469.39px;font-size:16px;color:#000;letter-spacing:0.155px;">Προσαρμογείς οθόνης</div>
<svg class="a" style="left:56px;top:491.30000000000007px;" width="22" height="22" viewBox="0 0 22 22"><use href="#i-imaging"/></svg>
<svg class="a" style="left:37.5px;top:496.80000000000007px;" width="7" height="9" viewBox="0 0 7 9"><path d="M1.5 1 L5 4.5 L1.5 8" stroke="#a8a8a8" stroke-width="1.3" fill="none"/></svg>
<div class="t" style="left:84.50px;top:493.76px;font-size:16px;color:#000;letter-spacing:-0.255px;">Συσκευές απεικόνισης</div>
<svg class="a" style="left:56px;top:515.6700000000001px;" width="22" height="22" viewBox="0 0 22 22"><use href="#i-hid"/></svg>
<svg class="a" style="left:37.5px;top:521.1700000000001px;" width="7" height="9" viewBox="0 0 7 9"><path d="M1.5 1 L5 4.5 L1.5 8" stroke="#a8a8a8" stroke-width="1.3" fill="none"/></svg>
<div class="t" style="left:84.50px;top:518.13px;font-size:16px;color:#000;letter-spacing:-0.125px;">Συσκευές διασύνδεσης χρήστη</div>
<svg class="a" style="left:56px;top:540.04px;" width="22" height="22" viewBox="0 0 22 22"><use href="#i-software"/></svg>
<svg class="a" style="left:37.5px;top:545.54px;" width="7" height="9" viewBox="0 0 7 9"><path d="M1.5 1 L5 4.5 L1.5 8" stroke="#a8a8a8" stroke-width="1.3" fill="none"/></svg>
<div class="t" style="left:84.50px;top:542.50px;font-size:16px;color:#000;letter-spacing:-0.132px;">Συσκευές λογισμικού</div>
<svg class="a" style="left:56px;top:564.41px;" width="22" height="22" viewBox="0 0 22 22"><use href="#i-system"/></svg>
<svg class="a" style="left:37.5px;top:569.91px;" width="7" height="9" viewBox="0 0 7 9"><path d="M1.5 1 L5 4.5 L1.5 8" stroke="#a8a8a8" stroke-width="1.3" fill="none"/></svg>
<div class="t" style="left:84.50px;top:566.87px;font-size:16px;color:#000;letter-spacing:-0.067px;">Συσκευές συστήματος</div>
<svg class="a" style="left:56px;top:590.28px;" width="22" height="22" viewBox="0 0 22 22"><use href="#i-printer"/></svg>
<svg class="a" style="left:37.5px;top:594.28px;" width="7" height="9" viewBox="0 0 7 9"><path d="M1.5 1 L5 4.5 L1.5 8" stroke="#a8a8a8" stroke-width="1.3" fill="none"/></svg>
<div class="t" style="left:84.50px;top:591.24px;font-size:16px;color:#000;letter-spacing:-0.298px;">Υπηρεσία παροχής εκτυπώσεων WSD</div>
<svg class="a" style="left:56px;top:613.15px;" width="22" height="22" viewBox="0 0 22 22"><use href="#i-monitor"/></svg>
<svg class="a" style="left:37.5px;top:618.65px;" width="7" height="9" viewBox="0 0 7 9"><path d="M1.5 1 L5 4.5 L1.5 8" stroke="#a8a8a8" stroke-width="1.3" fill="none"/></svg>
<div class="t" style="left:84.50px;top:615.61px;font-size:16px;color:#000;letter-spacing:0.082px;">Υπολογιστής</div>
</div>
<div class="a" style="left:107px;top:796px;width:1055px;height:1px;background:#e2e2e2"></div>
<div class="a" style="left:107px;top:797px;width:1055px;height:2px;background:#fbfbfb"></div>
<div class="a" style="left:107px;top:799px;width:1055px;height:31px;background:#efefef;border-top:1px solid #e0e0e0"></div>
<div class="a" style="left:863px;top:800px;width:1px;height:29px;background:#dadada"></div>
<div class="a" style="left:1043px;top:800px;width:1px;height:29px;background:#dadada"></div>
<div class="a" style="left:1158px;top:800px;width:1px;height:29px;background:#dadada"></div>
<div class="a" style="left:0px;top:1027px;width:1920px;height:53px;background:#101010"></div>
<svg class="a" style="left:22px;top:1042px;" width="21" height="21" viewBox="0 0 21 21"><path d="M0 3 L8.6 1.8 V10 H0 Z M9.6 1.6 L21 0 V10 H9.6 Z M0 11 H8.6 V19.2 L0 18 Z M9.6 11 H21 V21 L9.6 19.4 Z" fill="#fff"/></svg>
<svg class="a" style="left:84px;top:1040px;" width="27" height="27" viewBox="0 0 27 27"><circle cx="16" cy="10" r="7.5" stroke="#fff" stroke-width="1.5" fill="none"/><path d="M10.5 15.5 L1.5 25" stroke="#fff" stroke-width="1.6"/></svg>
<svg class="a" style="left:146px;top:1042px;" width="32" height="21" viewBox="0 0 32 21"><rect x="6.5" y="0.75" width="19" height="19.5" stroke="#fff" stroke-width="1.5" fill="none"/><path d="M3 3.5 H1 V17.5 H3 M29 3.5 H31 V17.5 H29" stroke="#fff" stroke-width="1.3" fill="none"/></svg>
<svg class="a" style="left:215px;top:1040px;" width="29" height="29" viewBox="0 0 29 29"><path d="M1 1 L25 3 V27 L1 28 Z" fill="#5aa0d6"/><path d="M25 3 L28 5 V26 L25 27 Z" fill="#2d6ea8"/><circle cx="12.5" cy="14" r="9" fill="#f2842a" stroke="#fff" stroke-width="1.5"/><path d="M9.5 9 L17 14 L9.5 19 Z" fill="#fff"/></svg>
<svg class="a" style="left:284px;top:1039px;" width="30" height="30" viewBox="0 0 30 30"><path d="M2 13 C3 5 9 1 16 1 C24 1 29 7 29 15 V18 H10 C10.5 23 14.5 25.5 19 25.5 C22.5 25.5 25.5 24.5 28 23 V28 C25.5 29.3 22 30 18.5 30 C9.5 30 4.5 24.5 4.5 18 C4.5 12.5 8 8.5 13 7.5 C10.5 9.5 10 11.5 10 13.5 H22.5 C22.5 8.5 19.5 5.8 15.5 5.8 C10 5.8 5.5 9 2 13 Z" fill="#1a7fe0"/></svg>
<svg class="a" style="left:350px;top:1040px;" width="31" height="28" viewBox="0 0 31 28"><path d="M0 2 H12 L14 4 H30 V27 H0 Z" fill="#f6d78a"/><rect x="0" y="6" width="30" height="21" fill="#fbe3a0"/><path d="M5.5 17 Q5.5 13 9.5 13 H20.5 Q24.5 13 24.5 17 V26 H20.5 V18 H10.5 V26 H5.5 Z" fill="#39a8e6"/><rect x="2" y="3" width="8" height="2" fill="#69b6ef"/></svg>
<div class="a" style="left:338px;top:1077px;width:56px;height:3px;background:#76b9ed"></div>
<svg class="a" style="left:415px;top:1036px;" width="34" height="33" viewBox="0 0 34 33"><path d="M11 9 Q11 1 17 1 Q23 1 23 9" stroke="#ccc" stroke-width="2" fill="none"/><rect x="1" y="8" width="32" height="24" rx="1" fill="#fff"/><rect x="10" y="13" width="6.5" height="6.5" fill="#f25022"/><rect x="17.5" y="13" width="6.5" height="6.5" fill="#7fba00"/><rect x="10" y="20.5" width="6.5" height="6.5" fill="#00a4ef"/><rect x="17.5" y="20.5" width="6.5" height="6.5" fill="#ffb900"/></svg>
<svg class="a" style="left:483px;top:1037px;" width="32" height="32" viewBox="0 0 32 32"><circle cx="16" cy="16" r="15.5" fill="#e8501f"/><circle cx="17" cy="15" r="10" fill="#2a3f9a"/><path d="M2 12 Q6 2 16 1 Q28 2 31 14 Q28 8 22 7 Q27 13 24 20 Q20 27 12 25 Q5 22 4 14 Z" fill="#f48b1e"/><circle cx="18" cy="14" r="6" fill="#3a5fc8"/></svg>
<svg class="a" style="left:550px;top:1037px;" width="32" height="32" viewBox="0 0 32 32"><circle cx="16" cy="16" r="15.5" fill="#dd4436"/><path d="M16 16 L2.6 23.8 A15.5 15.5 0 0 0 24 29.3 Z" fill="#1da462"/><path d="M16 16 L24 29.3 A15.5 15.5 0 0 0 29.4 8.3 L16 8.3 Z" fill="#ffcd40"/><path d="M16 16 L2.6 23.8 A15.5 15.5 0 0 1 2.6 8.2 Z" fill="#1da462"/><circle cx="16" cy="16" r="7.2" fill="#fff"/><circle cx="16" cy="16" r="5.6" fill="#4a8af4"/></svg>
<div class="a" style="left:539px;top:1077px;width:56px;height:3px;background:#76b9ed"></div>
<svg class="a" style="left:617px;top:1037px;" width="32" height="34" viewBox="0 0 32 34"><path d="M16 1.5 C6 1.5 1.5 5 1.5 15 C1.5 22 4 25 8 27 V32.5 L13 28 H16 C26 28 30.5 24 30.5 15 C30.5 5 26 1.5 16 1.5 Z" fill="#7b519d" stroke="#fff" stroke-width="1.6"/><path d="M10 9 Q9 11 11 15 Q14 20 19 22 Q21 22 22 20 L19 18 L17 19 Q14 17 13 14 L14 12 Z" fill="#fff"/><path d="M17 7 Q23 7 24 13 M17 10 Q20.5 10 21 13" stroke="#fff" stroke-width="1.2" fill="none"/></svg>
<svg class="a" style="left:685px;top:1038px;" width="31" height="31" viewBox="0 0 31 31"><circle cx="15.5" cy="15.5" r="15" fill="#fff"/><circle cx="15.5" cy="15.5" r="13" fill="#5a78d8"/><path d="M10 14 V10 Q10 5 15.5 5 Q21 5 21 10 V14" stroke="#111" stroke-width="2.2" fill="none"/><rect x="8" y="13" width="15" height="11" fill="#111"/><path d="M9 16 H22 M9 19 H22" stroke="#8aa0e0" stroke-width="1"/></svg>
<svg class="a" style="left:751px;top:1041px;" width="33" height="26" viewBox="0 0 33 26"><path d="M6 0.5 H32.5 L27 25.5 H0.5 Z" fill="#2a6ad0"/><path d="M8 6 L17 13 L7 20" stroke="#fff" stroke-width="2.6" fill="none"/><path d="M16 20 H23" stroke="#fff" stroke-width="2.4"/></svg>
<div class="a" style="left:740px;top:1077px;width:56px;height:3px;background:#76b9ed"></div>
<svg class="a" style="left:819px;top:1043px;" width="31" height="22" viewBox="0 0 31 22"><rect x="0.5" y="0.5" width="29.5" height="21" fill="#3aa0e6" stroke="#1a70b8"/><circle cx="9" cy="10" r="5.5" fill="#fff"/><path d="M9 10 V4.5 A5.5 5.5 0 0 1 14.5 10 Z" fill="#f2a31b"/><path d="M17 5 H27 M17 9 H27 M17 13 H27" stroke="#fff" stroke-width="1.4"/></svg>
<div class="a" style="left:807px;top:1077px;width:56px;height:3px;background:#76b9ed"></div>
<svg class="a" style="left:886px;top:1038px;" width="31" height="31" viewBox="0 0 31 31"><path d="M14 1 L26 0 L30 3 V20 L18 22 Z" fill="#d0d0d0"/><path d="M14 1 L18 4 V22 L14 20 Z" fill="#8a8a8a"/><rect x="20" y="6" width="2" height="2" fill="#3c3"/><path d="M1 16 L14 14 L20 17 V29 L7 31 L1 28 Z" fill="#e4e4e4"/><path d="M1 16 L7 19 V31 L1 28 Z" fill="#999"/><rect x="3" y="21" width="2" height="4" fill="#333"/><rect x="11" y="21" width="2" height="4" fill="#333"/></svg>
<div class="a" style="left:874px;top:1077px;width:56px;height:3px;background:#76b9ed"></div>
<svg class="a" style="left:1470px;top:1042px;" width="23" height="22" viewBox="0 0 23 22"><circle cx="15.5" cy="5.5" r="3.8" stroke="#fff" stroke-width="1.3" fill="none"/><path d="M9 16 Q10 10 15.5 10 Q21 10 22 16" stroke="#fff" stroke-width="1.3" fill="none"/><circle cx="7" cy="11" r="3.8" stroke="#fff" stroke-width="1.3" fill="none"/><path d="M1 21 Q1.5 15.5 7 15.5 Q12.5 15.5 13 21" stroke="#fff" stroke-width="1.3" fill="none"/></svg>
<svg class="a" style="left:1519px;top:1046px;" width="20" height="12" viewBox="0 0 20 12"><path d="M1.5 10 L10 2 L18.5 10" stroke="#fff" stroke-width="1.4" fill="none"/></svg>
<svg class="a" style="left:1549px;top:1043px;" width="20" height="20" viewBox="0 0 20 20"><rect x="0" y="0" width="20" height="20" rx="1.5" fill="#d9261c"/><path d="M4 16 Q8 4 12 3 Q15 3 11 10 Q13 14 17 14" stroke="#fff" stroke-width="2.2" fill="none"/></svg>
<svg class="a" style="left:1579px;top:1044px;" width="20" height="19" viewBox="0 0 20 19"><path d="M5 1 L10 4.5 L5 8 L0 4.5 Z M15 1 L20 4.5 L15 8 L10 4.5 Z M5 8 L10 11.5 L5 15 L0 11.5 Z M15 8 L20 11.5 L15 15 L10 11.5 Z M10 12.5 L15 16 L10 19 L5 16 Z" fill="#fff"/></svg>
<svg class="a" style="left:1611px;top:1045px;" width="19" height="17" viewBox="0 0 19 17"><path d="M2 16 A14 14 0 0 1 16 2 M5.5 16 A10.5 10.5 0 0 1 16 5.5 M9 16 A7 7 0 0 1 16 9" stroke="#888" stroke-width="1.2" fill="none"/><circle cx="14.5" cy="14.5" r="2" fill="#fff"/></svg>
<svg class="a" style="left:1638px;top:1042px;" width="23" height="21" viewBox="0 0 23 21"><path d="M1 7 H5 L10 2 V19 L5 14 H1 Z" stroke="#fff" stroke-width="1.2" fill="none"/><path d="M13 7 Q15 10.5 13 14 M16 4.5 Q19.5 10.5 16 16.5 M19 2 Q24 10.5 19 19" stroke="#fff" stroke-width="1.2" fill="none"/></svg>
<svg class="a" style="left:1667px;top:1042px;" width="35" height="21" viewBox="0 0 35 21"><rect x="0.7" y="0.7" width="33.6" height="19.6" stroke="#fff" stroke-width="1.3" fill="none"/><path d="M4 5.5 H31 M4 9.5 H31" stroke="#fff" stroke-width="1" stroke-dasharray="1.5 1.5"/><path d="M4 14.5 H7 M9 14.5 H26 M28 14.5 H31" stroke="#fff" stroke-width="1"/></svg>
<div class="t" style="left:1715.00px;top:1047.10px;font-size:15px;color:#fff;transform:scaleX(0.9534);transform-origin:0 0;">ENG</div>
<div class="t" style="left:1776.00px;top:1035.30px;font-size:15px;color:#fff;letter-spacing:0.192px;">4:50 μμ</div>
<div class="t" style="left:1769.00px;top:1059.60px;font-size:15px;color:#fff;letter-spacing:0.951px;">6/2/2018</div>
<svg class="a" style="left:1865px;top:1042px;" width="23" height="23" viewBox="0 0 23 23"><path d="M1 1 H21 V16 H13 L10 19.5 L7 16 H1 Z" stroke="#fff" stroke-width="1.3" fill="none"/></svg>
<div class="a" style="left:1914px;top:1028px;width:1px;height:52px;background:#555"></div>
</body></html>
